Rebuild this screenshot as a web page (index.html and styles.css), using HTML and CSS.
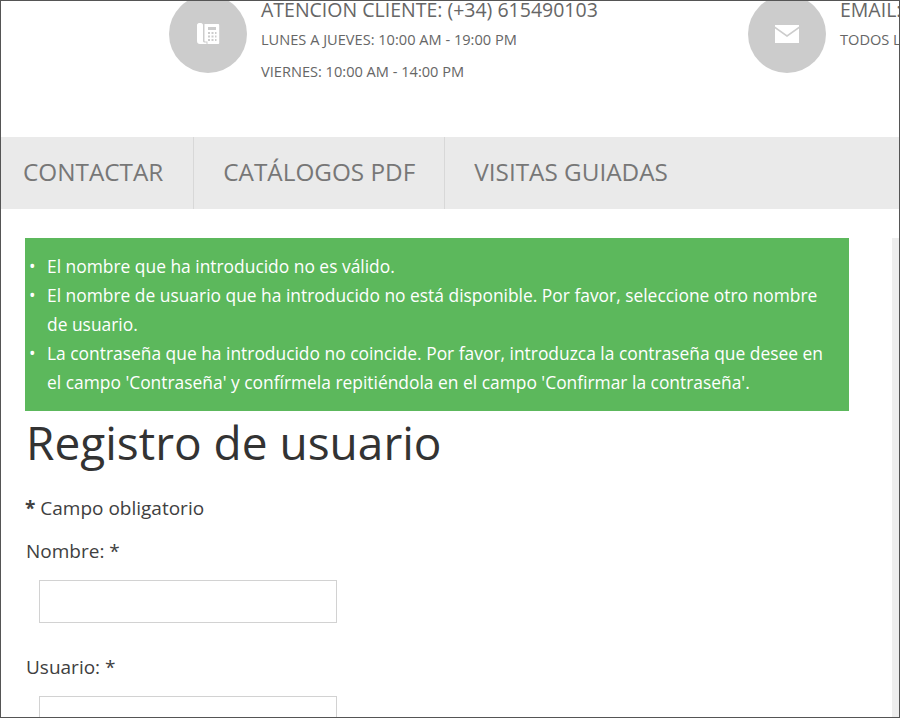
FILE: index.html
```html
<!DOCTYPE html>
<html lang="es">
<head>
    <meta charset="UTF-8">
    <title>Registro de usuario</title>
    <link rel="stylesheet" href="styles.css">
</head>
<body>

<div class="page">
    <header class="top">
        <div class="contact contact-phone">
            <div class="circle">
                <svg width="24" height="24" viewBox="0 0 24 24" fill="#fff">
                    <path d="M1 3c0-1 1-2 2-2h2c1 0 2 1 2 2v16c0 1 1 1.500 2 1.500h1.500v1.500H4c-2 0-3-1-3-3z"/>
                    <path d="M8.500 2H22c.8 0 1.200.5 1.200 1.200V21c0 .7-.4 1-1.200 1H11.500v-2.500H9c-.3 0-.5-.2-.5-.5zM12 5v3h8V5zm0 5v2h2v-2zm3.500 0v2h2v-2zm3.500 0v2h1.500v-2zM12 13.500v2h2v-2zm3.500 0v2h2v-2zm3.500 0v2h1.500v-2zM12 17v2h2v-2zm3.500 0v2h2v-2zm3.500 0v2h1.500v-2z" fill-rule="evenodd"/>
                </svg>
            </div>
            <div class="contact-text">
                <h4>ATENCIÓN CLIENTE: (+34) 615490103</h4>
                <p>LUNES A JUEVES: 10:00 AM - 19:00 PM</p>
                <p>VIERNES: 10:00 AM - 14:00 PM</p>
            </div>
        </div>
        <div class="contact contact-mail">
            <div class="circle">
                <svg width="24" height="18" viewBox="0 0 24 18" fill="#fff">
                    <path d="M0 1.500 12 10 24 1.500V0H0z"/>
                    <path d="M0 3.500V18h24V3.500L12 12z"/>
                </svg>
            </div>
            <div class="contact-text">
                <h4>EMAIL:</h4>
                <p>TODOS L</p>
            </div>
        </div>
    </header>

    <nav class="menu">
        <a href="#">CONTACTAR</a>
        <a href="#">CATÁLOGOS PDF</a>
        <a href="#">VISITAS GUIADAS</a>
    </nav>

    <div class="content">
        <main class="main">
            <div class="alert">
                <ul>
                    <li>El nombre que ha introducido no es válido.</li>
                    <li>El nombre de usuario que ha introducido no está disponible. Por favor, seleccione otro nombre de usuario.</li>
                    <li>La contraseña que ha introducido no coincide. Por favor, introduzca la contraseña que desee en el campo 'Contraseña' y confírmela repitiéndola en el campo 'Confirmar la contraseña'.</li>
                </ul>
            </div>
            <h1>Registro de usuario</h1>
            <p class="required"><b>*</b> Campo obligatorio</p>
            <form action="#" method="post">
                <label for="nombre">Nombre: *</label>
                <input type="text" id="nombre" name="nombre">
                <label for="usuario">Usuario: *</label>
                <input type="text" id="usuario" name="usuario">
            </form>
        </main>
        <aside class="side"></aside>
    </div>
</div>

</body>
</html>
```

FILE: styles.css
```css
html, body {
    margin: 0;
    padding: 0;
    height: 100%;
    overflow: hidden;
    background-color: white;
}
body {
    font-family: 'Open Sans', sans-serif;
    color: #404040;
}
.page {
    height: 718px;
    box-sizing: border-box;
    border: 1px solid #555;
    overflow: hidden;
}
.top {
    display: flex;
    height: 136px;
    padding-left: 168px;
    white-space: nowrap;
}
.contact {
    display: flex;
    align-items: flex-start;
}
.contact-phone {
    width: 579px;
    flex-shrink: 0;
}
.circle {
    width: 78px;
    height: 78px;
    margin-top: -6px;
    margin-right: 14px;
    border-radius: 50%;
    background-color: #ccc;
    display: flex;
    align-items: center;
    justify-content: center;
    flex-shrink: 0;
}
.contact-text h4 {
    margin: -3px 0 5px 0;
    font-size: 19.500px;
    line-height: 24px;
    font-weight: 400;
    color: #666;
}
.contact-text p {
    margin: 0;
    font-size: 14.600px;
    line-height: 25px;
    color: #666;
}
.contact-text p + p {
    margin-top: 7px;
}
.menu {
    display: flex;
    height: 72px;
    background-color: #eaeaea;
}
.menu a {
    padding: 0 29px;
    line-height: 69px;
    font-size: 24.300px;
    color: #777;
    text-decoration: none;
    border-left: 1px solid #d8d8d8;
}
.menu a:first-child {
    padding-left: 22px;
    padding-right: 30px;
    border-left: none;
}
.content {
    display: flex;
    justify-content: space-between;
    padding: 29px 0 0 24px;
}
.main {
    width: 824px;
}
.side {
    width: 7px;
    height: 500px;
    background-color: #eee;
}
.alert {
    background-color: #5cb85c;
    color: white;
    padding: 14px 19px 8px 22px;
    font-size: 17.400px;
    line-height: 29px;
    box-sizing: border-box;
    height: 173px;
}
.alert ul {
    margin: 0;
    padding: 0;
    list-style: none;
}
.alert li {
    position: relative;
}
.alert li::before {
    content: "•";
    position: absolute;
    left: -18px;
}
h1 {
    margin: 1px 0 0 1px;
    font-size: 46px;
    line-height: 60px;
    font-weight: 400;
    color: #333;
}
.required {
    margin: 23px 0 0 0;
    font-size: 19px;
    line-height: 26px;
}
label {
    display: block;
    margin-left: 1px;
    font-size: 19px;
    line-height: 26px;
}
.required + form label:first-child {
    margin-top: 17px;
}
input[type="text"] {
    display: block;
    box-sizing: border-box;
    width: 298px;
    height: 43px;
    margin: 16px 0 31px 14px;
    border: 1px solid #d2d2d2;
    background-color: white;
}
```
